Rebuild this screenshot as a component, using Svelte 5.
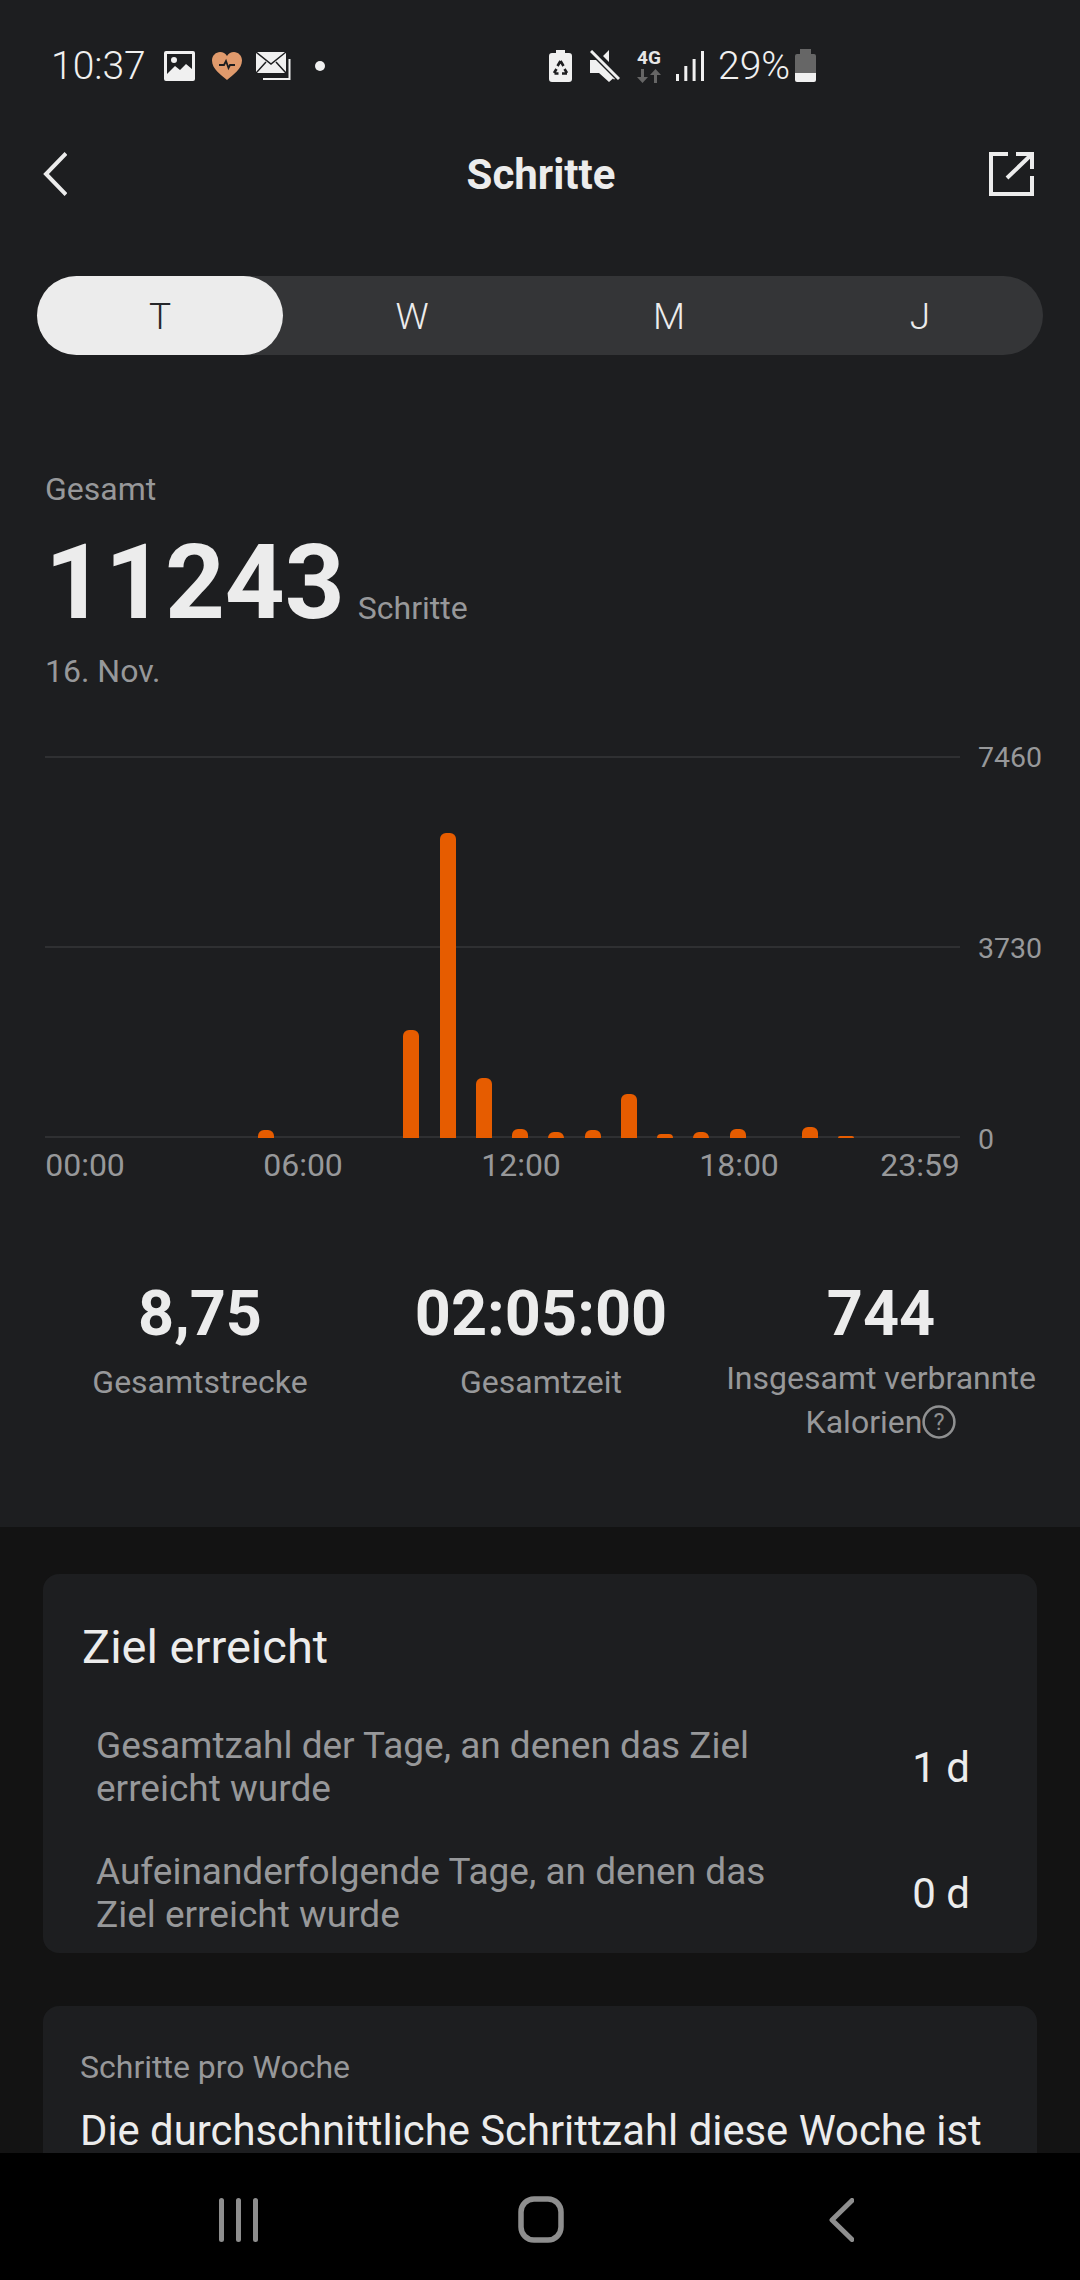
<script>
  const bars = [0,0,0,0,0,8,0,0,0,108,305,60,9,6,8,44,4,6,9,0,11,2,0,0];
  const tabs = ['T','W','M','J'];
  const gridlines = [['7460',756],['3730',946],['0',1137]];
</script>

<div class="screen">
  <main class="main">
    <section class="top">
      <div class="status">
        <span class="time">10:37</span>
        <svg class="i-image" width="31" height="30" viewBox="0 0 31 30"><path fill="#f0f0f0" fill-rule="evenodd" d="M2 0h27a2 2 0 0 1 2 2v26a2 2 0 0 1-2 2H2a2 2 0 0 1-2-2V2a2 2 0 0 1 2-2zM3 3v20l8-8 5 4 6-6 6 5V3z"/><circle cx="10" cy="9" r="3" fill="#f0f0f0"/></svg>
        <svg class="i-heart" width="30" height="28" viewBox="0 0 30 28"><path fill="#e09a6c" d="M15 28C9 23 0 17 0 8.500 0 3.500 4 0 8 0c3 0 5.500 1.500 7 4 1.500-2.500 4-4 7-4 4 0 8 3.500 8 8.500C30 17 21 23 15 28z"/><path fill="none" stroke="#1d1e20" stroke-width="1.800" d="M7 13h5l2-4 2.500 7 1.500-3h5"/></svg>
        <svg class="i-mail" width="35" height="30" viewBox="0 0 35 30"><path fill="#f0f0f0" d="M0 1h30v21H0z"/><path fill="none" stroke="#1d1e20" stroke-width="1.500" d="M0 1l15 12L30 1M0 22l10-11M30 22L20 11"/><path fill="none" stroke="#f0f0f0" stroke-width="2" d="M33.500 8v20H7"/></svg>
        <i class="dot"></i>
        <svg class="i-saver" width="23" height="32" viewBox="0 0 23 32"><path fill="#f0f0f0" d="M7 0h9v3h4a3 3 0 0 1 3 3v23a3 3 0 0 1-3 3H3a3 3 0 0 1-3-3V6a3 3 0 0 1 3-3h4z"/><path fill="none" stroke="#1d1e20" stroke-width="2.600" d="M11.500 11l-3 5 M11.500 11l3 5 M5 23l2.500-4 M5.500 23.500h4 M13 23.500h5 M18 23l-2.500-4"/></svg>
        <svg class="i-mute" width="30" height="32" viewBox="0 0 30 32"><path fill="#f0f0f0" d="M19 0v12L13 6zM0 10h6l19 19-1 .5-1-1-4 3.500-10-9H0zM19 19v1l-3-3z"/><path stroke="#f0f0f0" stroke-width="3" d="M1 1l28 28"/><path stroke="#1d1e20" stroke-width="1.500" d="M3 3l20 20" transform="translate(2 -2)"/></svg>
        <span class="net">
          <b>4G</b>
          <svg width="24" height="14" viewBox="0 0 24 14"><path fill="#666" d="M4 0h3v8h4l-5.500 6L0 8h4zM17 14h3V6h4L18.500 0 13 6h4z"/></svg>
        </span>
        <svg class="i-signal" width="28" height="30" viewBox="0 0 28 30"><path fill="#f0f0f0" d="M0 23h3v7H0zM8.300 15h3v15h-3zM16.600 8h3v22h-3zM25 0h3v30h-3z"/></svg>
        <span class="pct">29%</span>
        <svg class="i-batt" width="21" height="33" viewBox="0 0 21 33"><path fill="#666" d="M5 0h11v5h3a2 2 0 0 1 2 2v17H0V7a2 2 0 0 1 2-2h3z"/><path fill="#f0f0f0" d="M0 24h21v7a2 2 0 0 1-2 2H2a2 2 0 0 1-2-2z"/></svg>
      </div>

      <header class="bar">
        <svg width="24" height="44" viewBox="0 0 24 44"><path fill="none" stroke="#ececec" stroke-width="4" d="M23 1.500L3 22l20 20.500"/></svg>
        <h1>Schritte</h1>
        <svg class="share" width="45" height="44" viewBox="0 0 45 44"><path fill="none" stroke="#ececec" stroke-width="4" d="M19 2H2v40h41V24M18 26L42 3M27 2h16v15"/></svg>
      </header>

      <div class="tabs">
        {#each tabs as t, i}
          <div class="tab" class:on={i === 0}>{t}</div>
        {/each}
      </div>

      <div class="sum">
        <div class="sum-l">Gesamt</div>
        <div class="sum-v"><strong>11243</strong><span>Schritte</span></div>
        <div class="sum-l date">16. Nov.</div>
      </div>

      <div class="chart">
        <div class="plot">
          <div class="lines">
            {#each gridlines as g}
              <div class="line"><i></i><span>{g[0]}</span></div>
            {/each}
          </div>
          <div class="bars">
            {#each bars as h}
              <div class="cell">{#if h}<i style="height:{h}px"></i>{/if}</div>
            {/each}
          </div>
        </div>
        <div class="xaxis"><span>00:00</span><span>06:00</span><span>12:00</span><span>18:00</span><span>23:59</span></div>
      </div>

      <div class="stats">
        <div class="stat"><strong>8,75</strong><p>Gesamtstrecke</p></div>
        <div class="stat"><strong>02:05:00</strong><p>Gesamtzeit</p></div>
        <div class="stat"><strong>744</strong><p>Insgesamt verbrannte<br />Kalorien<svg width="34" height="34" viewBox="0 0 32 32"><circle cx="16" cy="16" r="14.500" fill="none" stroke="#8f9091" stroke-width="2.400"/><text x="16" y="23.500" text-anchor="middle" font-size="22" fill="#8f9091" font-family="Roboto">?</text></svg></p></div>
      </div>
    </section>

    <section class="lower">
      <div class="card goal">
        <h2>Ziel erreicht</h2>
        <div class="row"><p>Gesamtzahl der Tage, an denen das Ziel<br />erreicht wurde</p><span>1 d</span></div>
        <div class="row"><p>Aufeinanderfolgende Tage, an denen das<br />Ziel erreicht wurde</p><span>0 d</span></div>
      </div>
      <div class="card week">
        <div class="wk-l">Schritte pro Woche</div>
        <div class="wk-t">Die durchschnittliche Schrittzahl diese Woche ist</div>
      </div>
    </section>
  </main>

  <nav class="nav">
    <svg width="39" height="44" viewBox="0 0 39 44"><path stroke="#8e8e8e" stroke-width="5" stroke-linecap="round" d="M2.500 2.500v39M19.500 2.500v39M36.500 2.500v39"/></svg>
    <svg width="46" height="47" viewBox="0 0 46 47"><rect x="3" y="3" width="40" height="41" rx="13" fill="none" stroke="#8e8e8e" stroke-width="5.500"/></svg>
    <svg width="25" height="44" viewBox="0 0 25 44"><path fill="none" stroke="#8e8e8e" stroke-width="5" stroke-linecap="round" stroke-linejoin="round" d="M23 2.500L3 22l20 19.500"/></svg>
  </nav>
</div>

<style>
  :global(body) { margin: 0; background: #000; }
  .screen {
    width: 1080px; height: 2280px; display: flex; flex-direction: column; overflow: hidden;
    font-family: Roboto, "Noto Sans", sans-serif; background: #000; color: #ececec;
  }
  .main { height: 2153px; flex: none; background: #131313; }
  .top { height: 1527px; background: #1d1e20; box-sizing: border-box; }

  .status { height: 132px; display: flex; align-items: center; padding-left: 51px; box-sizing: border-box; }
  .time { font-size: 39px; font-weight: 300; width: 113px; color: #f0f0f0; }
  .i-heart { margin-left: 17px; }
  .i-mail { margin-left: 14px; }
  .dot { width: 10px; height: 10px; border-radius: 50%; background: #f0f0f0; margin-left: 24px; margin-right: 224px; }
  .i-mute { margin-left: 18px; }
  .net { margin-left: 17px; width: 24px; display: flex; flex-direction: column; align-items: center; gap: 2px; }
  .net b { font-size: 19px; line-height: 18px; font-weight: 700; color: #e6e6e6; }
  .net svg { display: block; }
  .i-signal { margin-left: 15px; }
  .pct { font-size: 39px; font-weight: 300; margin-left: 14px; width: 77px; color: #f0f0f0; white-space: nowrap; }
  .i-batt { margin-top: -2px; }

  .bar { height: 84px; display: grid; grid-template-columns: 1fr auto 1fr; align-items: center; padding: 0 46px 0 43px; }
  .share { justify-self: end; }
  h1 { margin: 0 0 0 5px; font-size: 42px; font-weight: 700; color: #ececec; }

  .tabs {
    margin: 60px 37px 0; height: 79px; border-radius: 40px; background: #343537;
    display: grid; grid-template-columns: 246px 258px 256px 246px;
  }
  .tab { display: flex; align-items: center; justify-content: center; font-size: 37px; font-weight: 300; padding-top: 1px; color: #ececec; border-radius: 40px; }
  .tab.on { background: #ececec; color: #26272a; }

  .sum { padding: 116px 45px 0; }
  .sum-l { font-size: 32px; line-height: 36px; color: #97989a; }
  .date { margin-top: -1px; }
  .sum-v { display: flex; align-items: baseline; height: 142px; line-height: 142px; margin-top: 5px; }
  .sum-v strong { font-size: 104.500px; font-weight: 700; color: #ececec; }
  .sum-v span { font-size: 32px; color: #97989a; margin-left: 13px; position: relative; top: 1px; }

  .chart { padding: 0 0 0 45px; }
  .plot { position: relative; height: 382px; margin-top: 67px; width: 1000px; }
  .lines { position: absolute; inset: 0; display: flex; flex-direction: column; justify-content: space-between; }
  .line { height: 2px; display: flex; align-items: center; }
  .line i { width: 915px; height: 2px; background: #2f3032; flex: none; }
  .line span { font-size: 28.500px; color: #97989a; margin-left: 18px; }
  .line:nth-child(2) span { margin-top: 2px; }
  .line:nth-child(3) span { margin-top: 4px; }
  .bars { position: absolute; left: 22px; bottom: 0; height: 100%; display: grid; grid-template-columns: repeat(24, 36.25px); align-items: end; }
  .cell { display: flex; justify-content: center; align-items: flex-end; height: 100%; }
  .cell i { width: 16px; background: #e65c00; border-radius: 6px 6px 0 0; display: block; }
  .xaxis { display: flex; font-size: 32px; color: #97989a; margin-top: 9px; line-height: 36px; }
  .xaxis span { width: 80px; text-align: center; margin-left: 138px; }
  .xaxis span:first-child { margin-left: 0; }
  .xaxis span:last-child { margin-left: 101px; }

  .stats { display: grid; grid-template-columns: 340px 342px 338px; margin: 95px 0 0 30px; }
  .stat { text-align: center; }
  .stat strong { display: block; font-size: 63px; line-height: 72px; font-weight: 700; color: #ececec; }
  .stat p { margin: 10px 0 0; font-size: 32px; line-height: 44px; color: #97989a; white-space: nowrap; }
  .stat:last-child p { margin-top: 6px; }
  .stat:last-child p svg { vertical-align: -6px; margin-left: 0; }

  .lower { padding: 47px 43px 0; }
  .card { background: #1d1e20; border-radius: 16px; }
  .goal { height: 379px; box-sizing: border-box; padding: 46px 41px 0 39px; }
  h2 { margin: 0 0 30px; font-size: 47px; line-height: 54px; font-weight: 400; color: #ececec; }
  .row { display: flex; justify-content: space-between; align-items: center; padding: 0 26px 0 14px; height: 126px; }
  .row p { margin: 0; font-size: 37px; line-height: 43px; color: #97989a; white-space: nowrap; }
  .row span { font-size: 42px; color: #ececec; }
  .week { margin-top: 53px; height: 147px; padding: 43px 37px 0; box-sizing: border-box; border-radius: 16px 16px 0 0; }
  .wk-l { font-size: 32px; line-height: 36px; color: #97989a; }
  .wk-t { font-size: 41.800px; line-height: 44px; color: #ececec; margin-top: 24px; white-space: nowrap; }

  .nav { flex: 1; display: flex; align-items: flex-start; padding: 43px 0 0 219px; box-sizing: border-box; background: #000; }
  .nav svg:nth-child(2) { margin: 0 0 0 260px; }
  .nav svg:nth-child(3) { margin: 2px 0 0 265px; }
  .nav svg:first-child { margin-top: 2px; }
</style>
